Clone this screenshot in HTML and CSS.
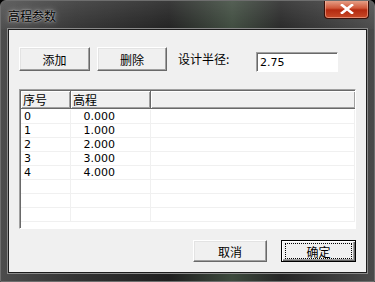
FILE: index.html
```html
<!DOCTYPE html>
<html lang="zh-CN">
<head>
    <meta charset="UTF-8">
    <title>高程参数</title>
    <link rel="stylesheet" href="styles.css">
</head>
<body>
    <div class="window">
        <div class="titlebar">
            <span class="title">高程参数</span>
            <div class="close">
                <svg width="14" height="10" viewBox="0 0 14 10">
                    <path d="M2 1 L12 9 M12 1 L2 9" stroke="#fff" stroke-width="2.6" stroke-linecap="square"/>
                </svg>
            </div>
        </div>
        <div class="client">
            <div class="toolbar">
                <button class="btn btn-add">添加</button>
                <button class="btn btn-del">删除</button>
                <label class="field-label">设计半径:</label>
                <input class="field" type="text" value="2.75">
            </div>
            <div class="list">
                <div class="list-head">
                    <div class="hcell c1">序号</div>
                    <div class="hcell c2">高程</div>
                    <div class="hcell c3"></div>
                </div>
                <div class="list-body">
                    <div class="row"><div class="cell c1">0</div><div class="cell c2 num">0.000</div><div class="cell c3"></div></div>
                    <div class="row"><div class="cell c1">1</div><div class="cell c2 num">1.000</div><div class="cell c3"></div></div>
                    <div class="row"><div class="cell c1">2</div><div class="cell c2 num">2.000</div><div class="cell c3"></div></div>
                    <div class="row"><div class="cell c1">3</div><div class="cell c2 num">3.000</div><div class="cell c3"></div></div>
                    <div class="row"><div class="cell c1">4</div><div class="cell c2 num">4.000</div><div class="cell c3"></div></div>
                    <div class="row"><div class="cell c1"></div><div class="cell c2"></div><div class="cell c3"></div></div>
                    <div class="row"><div class="cell c1"></div><div class="cell c2"></div><div class="cell c3"></div></div>
                    <div class="row"><div class="cell c1"></div><div class="cell c2"></div><div class="cell c3"></div></div>
                </div>
            </div>
            <div class="footer">
                <button class="btn btn-cancel">取消</button>
                <button class="btn btn-ok"><span class="focus">确定</span></button>
            </div>
        </div>
    </div>
</body>
</html>
```
FILE: styles.css
```css
body {
    margin: 0;
    background-color: #000;
    font-family: "Noto Sans CJK SC", "DejaVu Sans", sans-serif;
}
.window {
    width: 375px;
    height: 282px;
    box-sizing: border-box;
    border: 1px solid #6e6e6e;
    border-radius: 6px 6px 0 0;
    background: linear-gradient(90deg, #4c4c4c 0%, #333 20%, #1f1f1f 45%, #3d4a3d 62%, #262626 75%, #4a4a4a 100%);
    display: flex;
    flex-direction: column;
    overflow: hidden;
}
.titlebar {
    height: 28px;
    flex-shrink: 0;
    display: flex;
    justify-content: space-between;
    align-items: flex-start;
    background: linear-gradient(180deg, rgba(255,255,255,0.12) 0%, rgba(255,255,255,0.02) 100%);
}
.title {
    color: #000;
    font-size: 12px;
    line-height: 14px;
    margin: 8px 0 0 7px;
    text-shadow: 0 0 6px rgba(255,255,255,0.6), 0 0 2px rgba(255,255,255,0.8);
}
.close {
    width: 45px;
    height: 19px;
    margin-right: 5px;
    margin-top: -1px;
    box-sizing: border-box;
    border: 1px solid #3a1008;
    border-top: none;
    border-radius: 0 0 4px 4px;
    background: linear-gradient(180deg, #e8a890 0%, #d0583a 45%, #b42a10 55%, #c84a28 100%);
    display: flex;
    justify-content: center;
    align-items: center;
    box-shadow: inset 0 0 0 1px rgba(255,200,180,0.5);
}
.client {
    margin: 0 7px 8px 7px;
    flex: 1;
    background-color: #f0f0f0;
    border: 1px solid #1c1c1c;
    box-shadow: 0 0 0 1px #8a8a8a;
    padding: 17px 10px 0 10px;
    display: flex;
    flex-direction: column;
}
.toolbar {
    display: flex;
    align-items: flex-start;
}
.btn {
    font-family: "Noto Sans CJK SC", sans-serif;
    font-size: 12px;
    color: #000;
    background: #f0f0f0;
    border: 1px solid;
    border-color: #fff #696969 #696969 #fff;
    box-shadow: inset -1px -1px 0 #a0a0a0, inset 1px 1px 0 #e3e3e3;
    padding: 0;
    display: flex;
    justify-content: center;
    align-items: center;
}
.btn-add {
    width: 71px;
    height: 24px;
}
.btn-del {
    width: 70px;
    height: 24px;
    margin-left: 7px;
}
.field-label {
    font-size: 12px;
    width: 78px;
    margin: 4px 0 0 11px;
    line-height: 16px;
}
.field {
    width: 82px;
    height: 20px;
    box-sizing: border-box;
    margin: 5px 0 0 0;
    border: 1px solid;
    border-color: #a0a0a0 #fff #fff #a0a0a0;
    box-shadow: inset 1px 1px 0 #696969;
    background: #fff;
    font-family: "DejaVu Sans", sans-serif;
    font-size: 11px;
    padding: 0 3px;
}
.list {
    margin-top: 17px;
    width: 337px;
    height: 140px;
    box-sizing: border-box;
    border: 1px solid;
    border-color: #a0a0a0 #fff #fff #a0a0a0;
    box-shadow: inset 1px 1px 0 #696969;
    background: #fff;
    padding: 1px 0 0 1px;
    overflow: hidden;
}
.list-head {
    display: flex;
    height: 17px;
    background: #f0f0f0;
    border-bottom: 1px solid #696969;
    box-shadow: inset 0 -1px 0 #a0a0a0;
}
.hcell {
    font-size: 12px;
    line-height: 17px;
    box-sizing: border-box;
    border-right: 1px solid #696969;
    box-shadow: inset 1px 1px 0 #fff, inset -1px 0 0 #a0a0a0;
    padding-left: 2px;
}
.c1 {
    width: 50px;
}
.c2 {
    width: 80px;
}
.c3 {
    flex: 1;
}
.list-head .c3 {
    border-right: none;
}
.row {
    display: flex;
    height: 14px;
    border-bottom: 1px solid #f0f0f0;
    box-sizing: border-box;
}
.list-body {
    padding-top: 1px;
}
.cell {
    box-sizing: border-box;
    border-right: 1px solid #f0f0f0;
    font-family: "DejaVu Sans", sans-serif;
    font-size: 11px;
    line-height: 13px;
    padding-left: 3px;
}
.num {
    text-align: right;
    padding-right: 35px;
}
.footer {
    display: flex;
    justify-content: flex-end;
    margin-top: 11px;
}
.btn-cancel {
    width: 74px;
    height: 22px;
}
.btn-ok {
    width: 75px;
    height: 22px;
    margin-left: 14px;
    border-color: #000;
    box-shadow: inset 1px 1px 0 #fff, inset -1px -1px 0 #696969, inset -2px -2px 0 #a0a0a0;
}
.focus {
    display: flex;
    justify-content: center;
    align-items: center;
    width: 65px;
    height: 14px;
    border: 1px dotted #000;
}
```
